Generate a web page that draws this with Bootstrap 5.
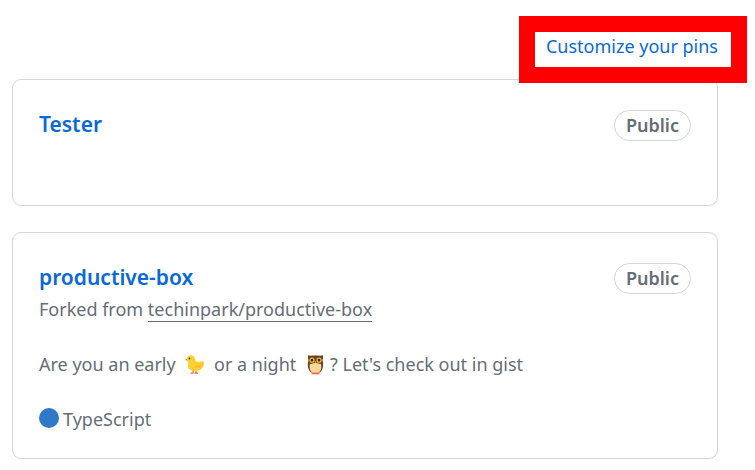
<!DOCTYPE html>
<html lang="en">
<head>
<meta charset="utf-8">
<meta name="viewport" content="width=device-width, initial-scale=1">
<title>Pinned repositories</title>
<link href="https://cdn.jsdelivr.net/npm/bootstrap@5.3.0/dist/css/bootstrap.min.css" rel="stylesheet">
<style>
  body { font-family: "Noto Sans", "Open Sans", sans-serif; font-size: 18px; line-height: 27px; color: #656d76; background: #fff; }
  .pins-header { padding: 16px 8px 0 12px; }
  .pins-highlight { position: relative; z-index: 1; border: 16px solid #f00; background: #fff; padding: 1px 13px 7px 11px; margin-bottom: -4px; }
  .pins-highlight a, .repo-name { color: #0969da; }
  .pins-list { padding: 0 37px 11px 12px; gap: 26px; }
  .repo { border: 1px solid #d0d7de; border-radius: 9px; padding: 30px 26px 25px; color: inherit; }
  .repo-empty { padding-bottom: 64px; }
  .repo-name { font-size: 21px; line-height: 28px; font-weight: 600; }
  .visibility { border: 1px solid #d0d7de; font-weight: 600; line-height: 29px; padding: 0 11px; }
  .fork-line { margin: 2px 0 0; }
  .fork-source { color: inherit; border-bottom: 1px solid #656d76; }
  .emoji { width: 21px; height: 21px; margin: 0 4px; vertical-align: -4px; }
  .lang-dot { width: 20px; height: 20px; background: #3178c6; margin-bottom: 4px; }
</style>
</head>
<body>
<header class="pins-header d-flex justify-content-end">
  <div class="pins-highlight"><a href="#" class="text-decoration-none">Customize your pins</a></div>
</header>
<main class="pins-list d-flex flex-column">
  <article class="card repo repo-empty">
    <div class="d-flex justify-content-between align-items-start">
      <a href="#" class="repo-name text-decoration-none">Tester</a>
      <span class="visibility rounded-pill">Public</span>
    </div>
  </article>
  <article class="card repo">
    <div class="d-flex justify-content-between align-items-start">
      <a href="#" class="repo-name text-decoration-none">productive-box</a>
      <span class="visibility rounded-pill">Public</span>
    </div>
    <p class="fork-line">Forked from <a href="#" class="fork-source text-decoration-none">techinpark/productive-box</a></p>
    <p class="my-4 py-1">Are you an early
      <svg class="emoji" viewBox="0 0 21 21" role="img" aria-label="chick"><path d="M9 16v3M12 16v3M6.500 19.200H9.500M10.500 19.200H14" stroke="#f4703c" stroke-width="1.300" fill="none"/><path d="M1 5.800 4 4.200V7z" fill="#ef7b35"/><path d="M3 5C3 0 10.500 0 11 5c.2 2 1.500 2.800 3 2.800 2 0 3.500-.7 5.500-.8 1.500 5-1.500 10-8.500 10C5 17 2.500 13 4.500 9 3.500 8 3 7 3 5z" fill="#fbd02f"/><path d="M11 11c2.500 1.300 5.500 .3 8-1.500-.5 3.500-4 5.300-6.500 4.300-1.500-.6-2-1.700-1.500-2.800z" fill="#f7bf27"/><circle cx="5.500" cy="4.500" r=".9" fill="#503528"/></svg>
      or a night
      <svg class="emoji" viewBox="0 0 21 21" role="img" aria-label="owl"><path d="M3 1.200C5 2 7 1.500 10.500 1.500S16 2 18 1.200c.5 2-.2 3.200-.5 5.300 1.300 4 .8 9-2.500 12H6C2.700 15.500 2.200 10.500 3.500 6.500 3.200 4.400 2.500 3.200 3 1.200z" fill="#6b402a"/><path d="M5 10c3-.5 4-1 5.500-1s2.500.5 5.500 1c1 4-.5 7.500-2.500 9h-6C5.500 17.500 4 14 5 10z" fill="#fbd79b"/><path d="M6.500 19.400h8" stroke="#f4703c" stroke-width="1.800"/><g fill="#3f281e" stroke="#e3be36" stroke-width="1.300"><circle cx="7" cy="6.200" r="2"/><circle cx="14" cy="6.200" r="2"/></g><path d="M9.500 7.200h2l-1 2.300z" fill="#efab32"/></svg>? Let's check out in gist</p>
    <div class="d-flex align-items-center"><span class="lang-dot rounded-circle me-1" aria-hidden="true"></span><span>TypeScript</span></div>
  </article>
</main>
<script src="https://cdn.jsdelivr.net/npm/bootstrap@5.3.0/dist/js/bootstrap.bundle.min.js"></script>
</body>
</html>
